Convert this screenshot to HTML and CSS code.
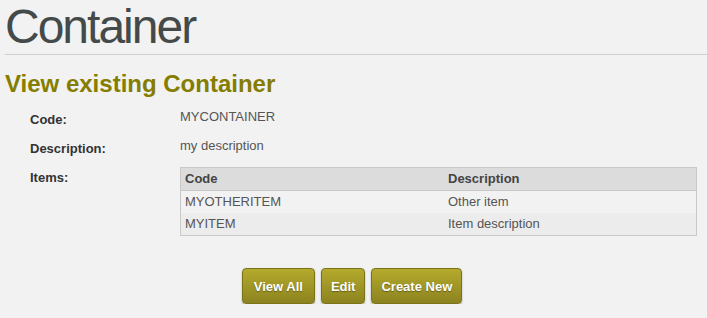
FILE: index.html
```html
<!DOCTYPE html>
<html lang="en">
  <head>
    <meta charset="UTF-8" />
    <meta name="viewport" content="width=device-width, initial-scale=1.0" />
    <title>Container</title>
    <link rel="stylesheet" href="styles.css">
  </head>
  <body>
    <div class="page">
      <h1 class="page-title">Container</h1>
      <h2 class="section-title">View existing Container</h2>

      <div class="details">
        <div class="field">
          <div class="field-label">Code:</div>
          <div class="field-value">MYCONTAINER</div>
        </div>
        <div class="field">
          <div class="field-label">Description:</div>
          <div class="field-value">my description</div>
        </div>
        <div class="field">
          <div class="field-label">Items:</div>
          <div class="field-value">
            <table class="items">
              <thead>
                <tr>
                  <th class="col-code">Code</th>
                  <th>Description</th>
                </tr>
              </thead>
              <tbody>
                <tr>
                  <td>MYOTHERITEM</td>
                  <td>Other item</td>
                </tr>
                <tr class="alt">
                  <td>MYITEM</td>
                  <td>Item description</td>
                </tr>
              </tbody>
            </table>
          </div>
        </div>
      </div>

      <div class="actions">
        <button class="btn btn-wide">View All</button>
        <button class="btn">Edit</button>
        <button class="btn">Create New</button>
      </div>
    </div>
  </body>
</html>
```

FILE: styles.css
```css
body {
  margin: 0;
  background-color: #f2f2f2;
  font-family: "Liberation Sans", Arial, sans-serif;
  font-size: 13px;
  color: #555;
}
.page {
  padding-left: 5px;
}
.page-title {
  margin: 0;
  font-size: 48px;
  font-weight: normal;
  line-height: 53px;
  letter-spacing: -2px;
  color: #444a4a;
  padding-bottom: 1px;
  border-bottom: 1px solid #cfcfcf;
}
.section-title {
  margin: 15px 0 11px;
  font-size: 24px;
  line-height: 28px;
  color: #857d00;
}
.details {
  padding-left: 25px;
}
.field {
  display: flex;
  margin-bottom: 11px;
  line-height: 15px;
}
.field-label {
  width: 150px;
  padding-top: 3px;
  font-weight: bold;
  color: #333;
}
.field-value {
  flex: 1;
  padding-right: 10px;
}
.items {
  width: 100%;
  border-collapse: collapse;
  border: 1px solid #c9c9c9;
  font-size: 13px;
  color: #555;
}
.items th {
  text-align: left;
  background-color: #dcdcdc;
  color: #444;
  padding: 3px 4px 4px;
  border-bottom: 1px solid #c9c9c9;
}
.items td {
  padding: 3px 4px 4px;
}
.items .col-code {
  width: 255px;
}
.items .alt td {
  background-color: #ececec;
}
.actions {
  display: flex;
  justify-content: center;
  gap: 6px;
  margin: 32px 8px 0 0;
}
.btn {
  height: 36px;
  padding: 0 9px;
  font-family: "Liberation Sans", Arial, sans-serif;
  font-size: 13px;
  font-weight: bold;
  color: #fff;
  text-shadow: 0 1px 1px rgba(0, 0, 0, 0.35);
  background: linear-gradient(#b4aa2d, #8c8320);
  border: 1px solid #7b7318;
  border-radius: 4px;
  box-shadow: 0 1px 2px rgba(0, 0, 0, 0.3);
  cursor: pointer;
}
.btn-wide {
  padding: 0 11px;
}
```
